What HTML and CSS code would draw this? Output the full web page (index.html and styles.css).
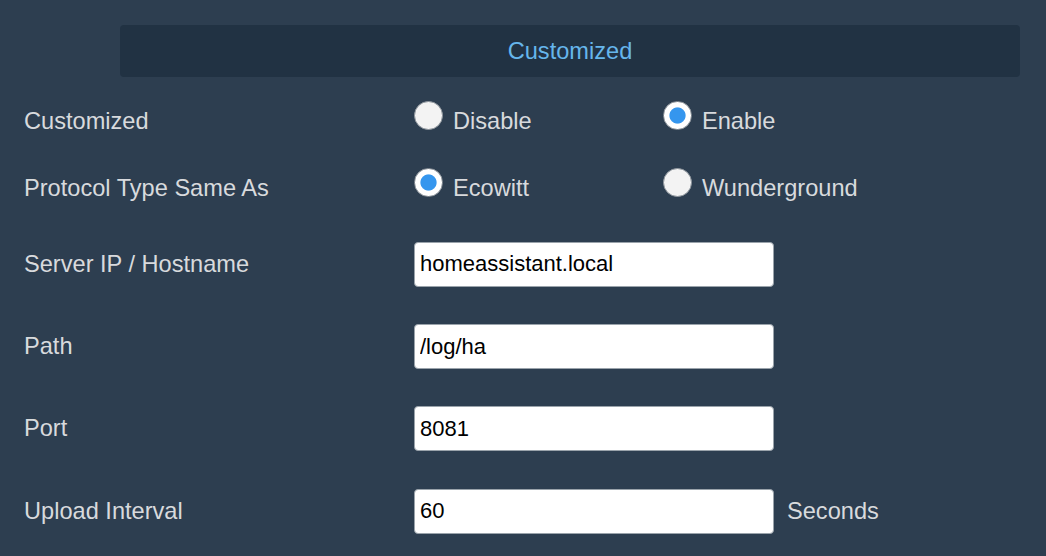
FILE: index.html
```html
<!DOCTYPE html>
<html>
<head>
<meta charset="utf-8">
<link rel="stylesheet" href="styles.css">
</head>
<body>
<div class="page">
  <div class="section-title">Customized</div>

  <div class="row row-radio">
    <div class="label">Customized</div>
    <div class="options">
      <label class="option"><input type="radio" name="cust" class="radio"><span>Disable</span></label>
      <label class="option"><input type="radio" name="cust" class="radio" checked><span>Enable</span></label>
    </div>
  </div>

  <div class="row row-radio">
    <div class="label">Protocol Type Same As</div>
    <div class="options">
      <label class="option"><input type="radio" name="proto" class="radio" checked><span>Ecowitt</span></label>
      <label class="option"><input type="radio" name="proto" class="radio"><span>Wunderground</span></label>
    </div>
  </div>

  <div class="inputs">
    <div class="row row-input">
      <div class="label">Server IP / Hostname</div>
      <div class="control"><input class="text" type="text" value="homeassistant.local"></div>
    </div>
    <div class="row row-input">
      <div class="label">Path</div>
      <div class="control"><input class="text" type="text" value="/log/ha"></div>
    </div>
    <div class="row row-input">
      <div class="label">Port</div>
      <div class="control"><input class="text" type="text" value="8081"></div>
    </div>
    <div class="row row-input">
      <div class="label">Upload Interval</div>
      <div class="control"><input class="text" type="text" value="60"><span class="unit">Seconds</span></div>
    </div>
  </div>
</div>
</body>
</html>
```

FILE: styles.css
```css
html, body {
  margin: 0;
  padding: 0;
  background: #2d3e50;
}

body {
  font-family: "Liberation Sans", Arial, sans-serif;
  color: #d8dadd;
  width: 1046px;
  height: 556px;
  overflow: hidden;
}

.page {
  padding: 25px 26px 0 24px;
}

.section-title {
  margin-left: 96px;
  width: 900px;
  height: 52px;
  line-height: 52px;
  background: #213243;
  border-radius: 4px;
  color: #66b6ec;
  font-size: 23.6px;
  text-align: center;
}

.row {
  display: grid;
  grid-template-columns: 390px 1fr;
  align-items: center;
}

.row-radio {
  height: 67px;
}

.section-title + .row-radio {
  margin-top: 11px;
}

.label {
  font-size: 23.6px;
  color: #d8dadd;
}

.options {
  display: flex;
  align-items: center;
}

.option {
  width: 249px;
  display: flex;
  align-items: center;
  gap: 10px;
  font-size: 23.6px;
  color: #d8dadd;
}

.radio {
  appearance: none;
  -webkit-appearance: none;
  margin: 0 0 13px 0;
  width: 29px;
  height: 29px;
  border-radius: 50%;
  border: 1px solid #8d949b;
  background: #f3f3f3;
  box-sizing: border-box;
  flex: none;
}

.radio:checked {
  background: radial-gradient(circle, #3596ee 0 7.6px, #ffffff 8.6px);
}

.inputs {
  margin-top: 1px;
}

.row-input {
  height: 82.4px;
}

.control {
  display: flex;
  align-items: center;
}

.text {
  box-sizing: border-box;
  width: 360px;
  height: 45px;
  margin: 0;
  padding: 0 5px;
  border: 1px solid #9aa3ab;
  border-radius: 4px;
  background: #ffffff;
  font-family: "Liberation Sans", Arial, sans-serif;
  font-size: 22px;
  color: #000000;
  outline: none;
}

.unit {
  margin-left: 13px;
  font-size: 23.6px;
  color: #d8dadd;
}
```
